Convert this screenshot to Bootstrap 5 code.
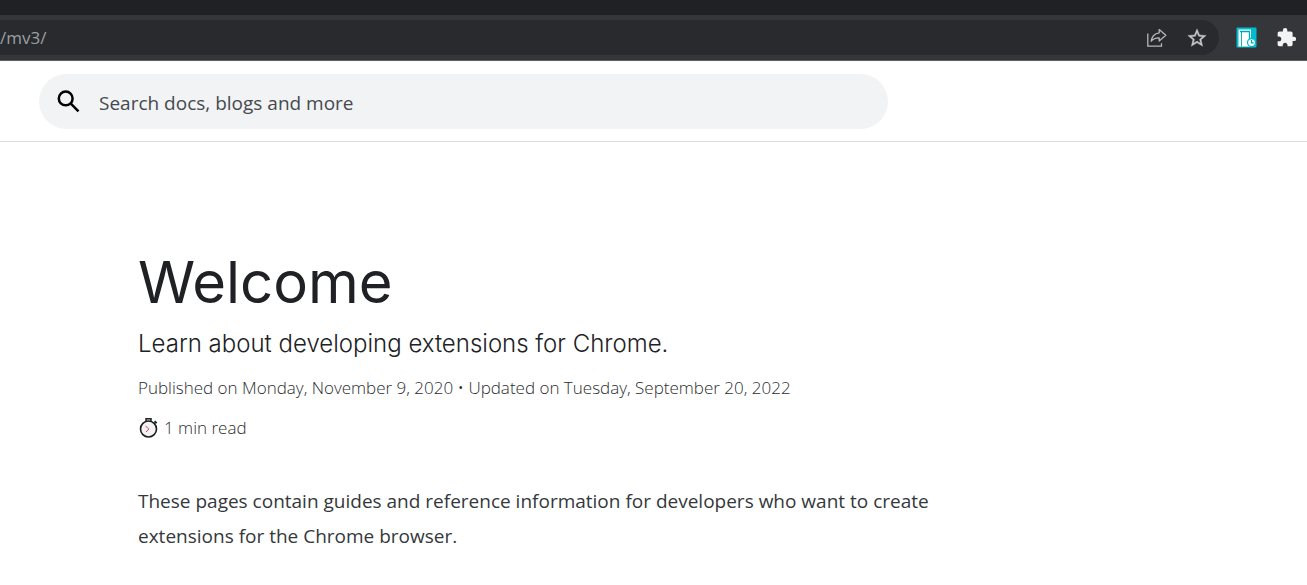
<!DOCTYPE html>
<html lang="en">
<head>
<meta charset="utf-8">
<meta name="viewport" content="width=device-width, initial-scale=1">
<title>Welcome - Chrome Developers</title>
<link href="https://cdn.jsdelivr.net/npm/bootstrap@5.3.0/dist/css/bootstrap.min.css" rel="stylesheet">
<style>
  body { font-family: "Open Sans", "Noto Sans", sans-serif; color: #35383b; background: #fff; }
  .tab-strip { height: 15px; background: #202124; }
  .toolbar { background: #35363a; border-bottom: 1px solid #5c5d60; padding: 5px 10px 5px 0; gap: 17px; }
  .omnibox { height: 35px; background: #292a2d; border-radius: 0 18px 18px 0; padding-right: 11px; gap: 18px; }
  .url-input { color: #9aa0a6; font-size: 17px; line-height: 24px; min-width: 0; outline: 0; }
  .tool-btn { width: 22px; height: 22px; }
  .tool-btn svg, .search-icon, .watch { display: block; flex: none; }
  .site-header { padding: 13px 39px 12px; border-bottom: 1px solid #dadce0; }
  .search-box { height: 55px; max-width: 849px; background: #f1f3f4; padding: 0 18px; gap: 18px; }
  .search-input { color: #3c4043; font-size: 19px; line-height: 28px; min-width: 0; outline: 0; padding: 3px 0 0; }
  .search-input::placeholder { color: #46494d; opacity: 1; }
  .article { max-width: 970px; padding: 104px 24px 32px 138px; }
  .title { font-family: Inter, sans-serif; font-size: 58px; line-height: 72px; font-weight: 400; color: #202124; }
  .intro { font-family: Inter, sans-serif; font-size: 24px; line-height: 36px; font-weight: 350; color: #202124; margin: 8px 0 12px; }
  .meta { font-size: 17px; line-height: 28px; margin-bottom: 12px; font-weight: 335; color: #2b2d30; }
  .copy { font-size: 19px; line-height: 35px; margin-top: 42px; font-weight: 380; }
</style>
</head>
<body>
<div class="tab-strip"></div>
<div class="toolbar d-flex align-items-center">
  <div class="omnibox d-flex align-items-center flex-grow-1">
    <input class="url-input flex-grow-1 border-0 bg-transparent p-0" type="text" value="/mv3/" aria-label="Address">
    <button class="tool-btn btn p-0 border-0" type="button" aria-label="Share">
      <svg width="22" height="22" viewBox="0 0 22 22" fill="none" stroke="#b4b7bb" stroke-width="1.3"><path d="M1.8 6.500V19.200H15.500V16.200"/><path d="M13.200 2.600L19.800 8.300L13.200 14V10.800C9.500 10.700 7.200 11.700 5.200 14.200C5.800 9.600 8.400 6.500 13.200 5.800Z" stroke-linejoin="round"/></svg>
    </button>
    <button class="tool-btn btn p-0 border-0" type="button" aria-label="Bookmark this page">
      <svg width="22" height="22" viewBox="0 0 24 24" fill="#c5c7ca" stroke="#c5c7ca" stroke-width=".4"><path d="M22 9.240l-7.190-.62L12 2 9.190 8.630 2 9.240l5.460 4.730L5.820 21 12 17.270 18.180 21l-1.630-7.030L22 9.240zM12 15.400l-3.760 2.270 1-4.280-3.320-2.880 4.380-.38L12 6.100l1.710 4.040 4.380.38-3.320 2.880 1 4.280L12 15.400z"/></svg>
    </button>
  </div>
  <button class="tool-btn btn p-0 border-0" type="button" aria-label="Reading list extension">
    <svg width="22" height="22" viewBox="0 0 22 22"><rect x="0.500" y="0.500" width="20" height="20" rx="1" fill="#00bccd"/><path d="M2.500 2.500H15V19.500H2.500Z" fill="#fff"/><path d="M5.500 5V19.500" stroke="#00bccd"/><path d="M4 4.500H13.500V13" stroke="#00a9ba" stroke-width="1.300" fill="none"/><circle cx="15.500" cy="15.500" r="4" fill="#fff" stroke="#00bccd" stroke-width="1.300"/><path d="M15.500 13V15.800H17.700" fill="none" stroke="#00a9ba" stroke-width="1.200"/></svg>
  </button>
  <button class="tool-btn btn p-0 border-0" type="button" aria-label="Extensions">
    <svg width="22" height="22" viewBox="-1 0 25 25" fill="#f1f3f4"><path d="M20.500 11H19V7c0-1.100-.9-2-2-2h-4V3.500a2.500 2.500 0 0 0-5 0V5H4c-1.100 0-1.990.9-1.990 2v3.800H3.500c1.490 0 2.700 1.210 2.700 2.700s-1.210 2.700-2.700 2.700H2V20c0 1.100.9 2 2 2h3.800v-1.500c0-1.490 1.210-2.700 2.700-2.700s2.700 1.210 2.700 2.700V22H17c1.100 0 2-.9 2-2v-4h1.500a2.500 2.500 0 0 0 0-5z"/></svg>
  </button>
</div>
<header class="site-header">
  <form class="search-box d-flex align-items-center rounded-pill" role="search">
    <svg class="search-icon" width="24" height="24" viewBox="0 0 24 24" fill="none" stroke="#000" stroke-width="2.500"><circle cx="8.700" cy="8.400" r="6.900"/><path d="M13.600 13.400L21.500 21.300"/></svg>
    <input class="search-input flex-grow-1 border-0 bg-transparent" type="search" placeholder="Search docs, blogs and more" aria-label="Search docs, blogs and more">
  </form>
</header>
<main class="article">
  <h1 class="title m-0">Welcome</h1>
  <p class="intro">Learn about developing extensions for Chrome.</p>
  <p class="meta">Published on Monday, November 9, 2020 • Updated on Tuesday, September 20, 2022</p>
  <p class="meta d-flex align-items-center gap-1">
    <svg class="watch" width="22" height="22" viewBox="0 0 22 22"><path d="M8 4V1.800H13V4" fill="#ddd" stroke="#222" stroke-width="1.500"/><path d="M16.500 4.200L18.600 6.200" stroke="#222" stroke-width="2"/><circle cx="10.500" cy="12" r="8" fill="#f3f2f4" stroke="#1c1c1c" stroke-width="1.600"/><path d="M7.500 9L11 12" stroke="#e58a96" stroke-width="1.200"/><path d="M11 12L8 15" stroke="#d0475b"/></svg>
    <span>1 min read</span>
  </p>
  <p class="copy mb-0">These pages contain guides and reference information for developers who want to create extensions for the Chrome browser.</p>
</main>
<script src="https://cdn.jsdelivr.net/npm/bootstrap@5.3.0/dist/js/bootstrap.bundle.min.js"></script>
</body>
</html>
